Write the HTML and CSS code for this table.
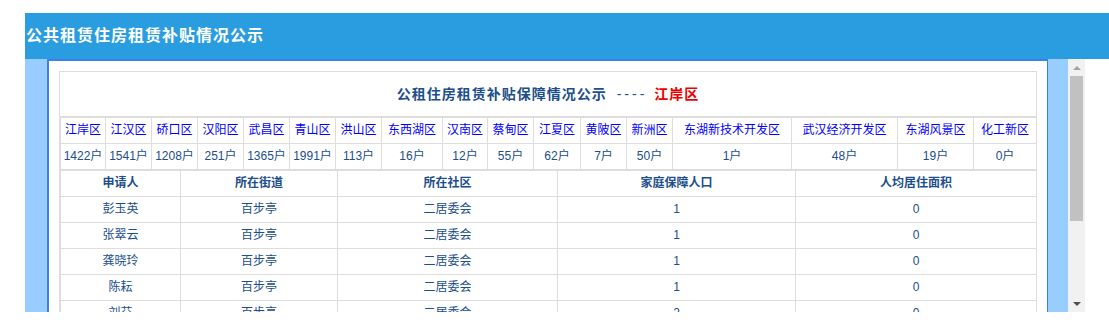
FILE: index.html
```html
<!DOCTYPE html>
<html lang="zh-CN">
<head>
<meta charset="utf-8">
<title>公共租赁住房租赁补贴情况公示</title>
<link rel="stylesheet" href="styles.css">
</head>
<body>
<div class="topbar">公共租赁住房租赁补贴情况公示</div>
<div class="wrap">
  <div class="strip strip-left"></div>
  <div class="frame">
    <div class="box">
      <div class="title">公租住房租赁补贴保障情况公示<span class="dash">----</span><span class="area">江岸区</span></div>
      <table class="dist">
        <colgroup>
          <col class="c45"><col class="c46"><col class="c46"><col class="c46"><col class="c46"><col class="c46"><col class="c46"><col class="c61"><col class="c45"><col class="c46"><col class="c47"><col class="c46"><col class="c46"><col class="c119"><col class="c106"><col class="c76"><col class="c63">
        </colgroup>
        <tr class="links">
          <td>江岸区</td><td>江汉区</td><td>硚口区</td><td>汉阳区</td><td>武昌区</td><td>青山区</td><td>洪山区</td><td>东西湖区</td><td>汉南区</td><td>蔡甸区</td><td>江夏区</td><td>黄陂区</td><td>新洲区</td><td>东湖新技术开发区</td><td>武汉经济开发区</td><td>东湖风景区</td><td>化工新区</td>
        </tr>
        <tr>
          <td>1422户</td><td>1541户</td><td>1208户</td><td>251户</td><td>1365户</td><td>1991户</td><td>113户</td><td>16户</td><td>12户</td><td>55户</td><td>62户</td><td>7户</td><td>50户</td><td>1户</td><td>48户</td><td>19户</td><td>0户</td>
        </tr>
      </table>
      <table class="list">
        <colgroup>
          <col class="m1"><col class="m2"><col class="m3"><col class="m4"><col class="m5">
        </colgroup>
        <tr class="head"><td>申请人</td><td>所在街道</td><td>所在社区</td><td>家庭保障人口</td><td>人均居住面积</td></tr>
        <tr><td>彭玉英</td><td>百步亭</td><td>二居委会</td><td>1</td><td>0</td></tr>
        <tr><td>张翠云</td><td>百步亭</td><td>二居委会</td><td>1</td><td>0</td></tr>
        <tr><td>龚晓玲</td><td>百步亭</td><td>二居委会</td><td>1</td><td>0</td></tr>
        <tr><td>陈耘</td><td>百步亭</td><td>二居委会</td><td>1</td><td>0</td></tr>
        <tr><td>刘芬</td><td>百步亭</td><td>二居委会</td><td>2</td><td>0</td></tr>
        <tr><td>王敏</td><td>百步亭</td><td>二居委会</td><td>1</td><td>0</td></tr>
      </table>
    </div>
  </div>
  <div class="strip strip-right"></div>
  <div class="scrollbar">
    <div class="sb-btn"><span class="arrow-up"></span></div>
    <div class="sb-thumb"></div>
    <div class="sb-track"></div>
    <div class="sb-btn"><span class="arrow-down"></span></div>
  </div>
</div>
</body>
</html>
```

FILE: styles.css
```css
html, body {
  margin: 0;
  background: #fff;
}
body {
  padding: 13px 0 0 25px;
  overflow: hidden;
  font-family: "Liberation Sans", "Noto Sans CJK SC", sans-serif;
  font-size: 12px;
  color: #204e8a;
}
.topbar {
  height: 46px;
  line-height: 46px;
  background: #299ddf;
  color: #fff;
  font-weight: bold;
  font-size: 16px;
  letter-spacing: 1px;
  padding-left: 1px;
  white-space: nowrap;
}
.wrap {
  display: flex;
  width: 1060px;
  height: 253px;
  overflow: hidden;
}
.strip {
  background: #99ccff;
  flex: none;
}
.strip-left { width: 22px; }
.strip-right { width: 20px; }
.frame {
  flex: none;
  width: 978px;
  padding: 10px 10px 0 10px;
  background: #fff;
  border-left: 2px solid #3b7ff0;
  border-top: 2px solid #3b7ff0;
  border-right: 1px solid #3b7ff0;
}
.box {
  border: 1px solid #dddddd;
  border-bottom: none;
}
.title {
  height: 44px;
  line-height: 44px;
  text-align: center;
  border-bottom: 1px solid #dddddd;
  font-size: 14px;
  font-weight: bold;
  letter-spacing: 1px;
  color: #204e8a;
  white-space: nowrap;
}
.dash {
  font-weight: normal;
  letter-spacing: 3px;
  padding: 0 7px 0 10px;
}
.area { color: #ee0000; }
table {
  width: 100%;
  border-collapse: collapse;
  table-layout: fixed;
}
td {
  border: 1px solid #dddddd;
  padding: 0;
  height: 25px;
  line-height: 25px;
  text-align: center;
  white-space: nowrap;
  overflow: hidden;
}
.links td { color: #0000ff; }
.head td { font-weight: bold; }
.c45 { width: 45px; }
.c46 { width: 46px; }
.c47 { width: 47px; }
.c61 { width: 61px; }
.c63 { width: 63px; }
.c76 { width: 76px; }
.c106 { width: 106px; }
.c119 { width: 119px; }
.m1 { width: 120px; }
.m2 { width: 157px; }
.m3 { width: 220px; }
.m4 { width: 238px; }
.m5 { width: 241px; }
.scrollbar {
  flex: none;
  width: 17px;
  background: #f1f1f1;
  display: flex;
  flex-direction: column;
}
.sb-btn {
  height: 17px;
  flex: none;
  display: flex;
  align-items: center;
  justify-content: center;
}
.sb-thumb {
  height: 145px;
  margin: 0 2px;
  background: #c1c1c1;
  flex: none;
}
.sb-track { flex: 1; }
.arrow-up {
  width: 0;
  height: 0;
  border-left: 4px solid transparent;
  border-right: 4px solid transparent;
  border-bottom: 4px solid #a3a3a3;
}
.arrow-down {
  width: 0;
  height: 0;
  border-left: 4px solid transparent;
  border-right: 4px solid transparent;
  border-top: 4px solid #505050;
}
```
